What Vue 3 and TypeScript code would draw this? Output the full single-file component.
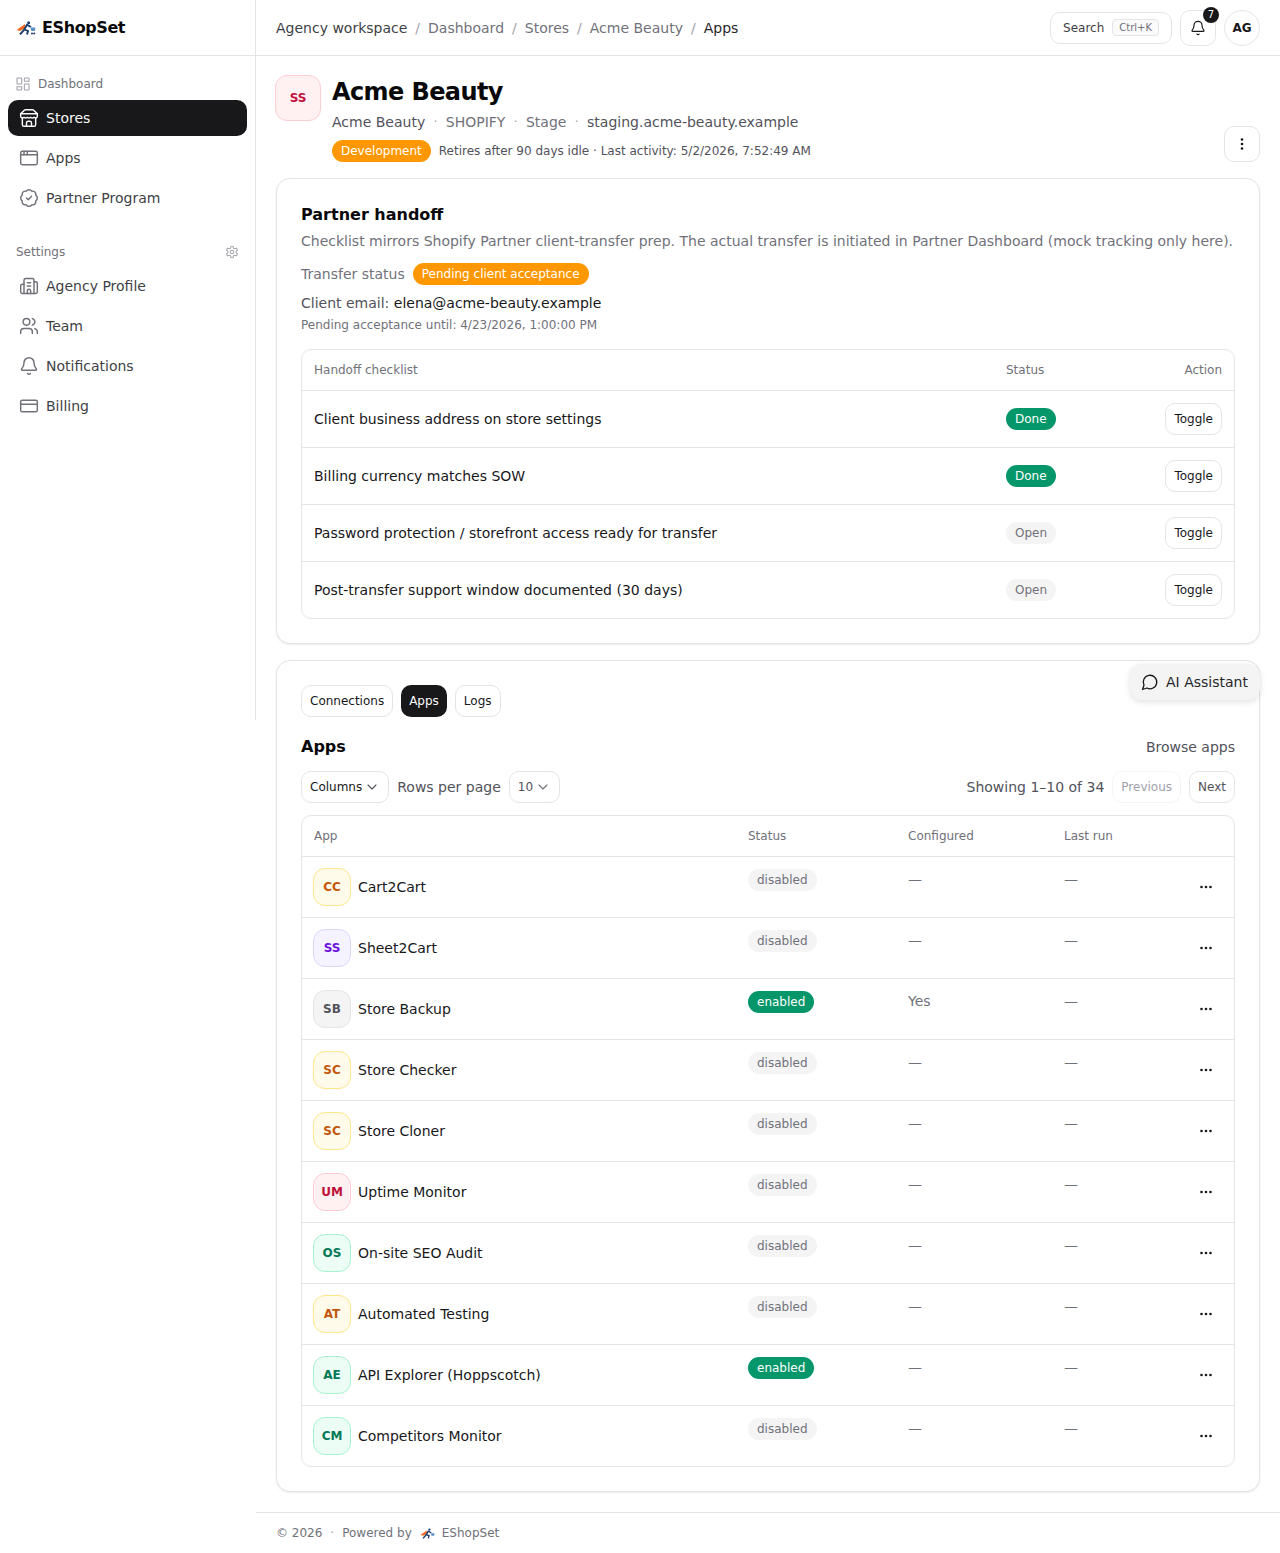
<script setup lang="ts">
interface NavItem {
  label: string
  icon: string
  active?: boolean
}

interface AppRow {
  code: string
  name: string
  tone: string
  enabled: boolean
  configured: string
}

const mainNav: NavItem[] = [
  { label: 'Stores', icon: 'store', active: true },
  { label: 'Apps', icon: 'apps' },
  { label: 'Partner Program', icon: 'partner' }
]

const settingsNav: NavItem[] = [
  { label: 'Agency Profile', icon: 'building' },
  { label: 'Team', icon: 'team' },
  { label: 'Notifications', icon: 'bell' },
  { label: 'Billing', icon: 'card' }
]

const crumbs = ['Dashboard', 'Stores', 'Acme Beauty']

const checklist = [
  { label: 'Client business address on store settings', done: true },
  { label: 'Billing currency matches SOW', done: true },
  { label: 'Password protection / storefront access ready for transfer', done: false },
  { label: 'Post-transfer support window documented (30 days)', done: false }
]

const apps: AppRow[] = [
  { code: 'CC', name: 'Cart2Cart', tone: 'amber', enabled: false, configured: '—' },
  { code: 'SS', name: 'Sheet2Cart', tone: 'violet', enabled: false, configured: '—' },
  { code: 'SB', name: 'Store Backup', tone: 'gray', enabled: true, configured: 'Yes' },
  { code: 'SC', name: 'Store Checker', tone: 'amber', enabled: false, configured: '—' },
  { code: 'SC', name: 'Store Cloner', tone: 'amber', enabled: false, configured: '—' },
  { code: 'UM', name: 'Uptime Monitor', tone: 'rose', enabled: false, configured: '—' },
  { code: 'OS', name: 'On-site SEO Audit', tone: 'green', enabled: false, configured: '—' },
  { code: 'AT', name: 'Automated Testing', tone: 'amber', enabled: false, configured: '—' },
  { code: 'AE', name: 'API Explorer (Hoppscotch)', tone: 'green', enabled: true, configured: '—' },
  { code: 'CM', name: 'Competitors Monitor', tone: 'green', enabled: false, configured: '—' }
]
</script>

<template>
  <div class="shell">
    <aside class="sidebar">
      <div class="brand">
        <svg class="brand-mark" viewBox="0 0 20 14" width="20" height="14">
          <path d="M0.5 9 L9 3 L9.5 7 L4 10 Z" fill="#f26a21" />
          <circle cx="12.6" cy="1.8" r="1.5" fill="#1c3f6e" />
          <path d="M4 13.5 L8 9 L11 3.8 L15 6 M8.5 8.5 L12 10 L11 13.5" fill="none" stroke="#1c3f6e" stroke-width="1.9" />
          <path d="M14.5 6.5 H19.5 L18.8 10 H15.3 Z" fill="#5b8fc4" />
          <circle cx="16" cy="12.4" r="1" fill="#1c3f6e" />
          <circle cx="18.2" cy="12.4" r="1" fill="#1c3f6e" />
        </svg>
        <span>EShopSet</span>
      </div>
      <nav class="nav">
        <div class="nav-head">
          <svg class="ico-dash" viewBox="0 0 24 24"><rect x="3" y="3" width="7" height="9" rx="1" /><rect x="14" y="3" width="7" height="5" rx="1" /><rect x="14" y="12" width="7" height="9" rx="1" /><rect x="3" y="16" width="7" height="5" rx="1" /></svg>
          <span>Dashboard</span>
        </div>
        <a v-for="item in mainNav" :key="item.label" class="nav-item" :class="{ active: item.active }">
          <svg class="ico" viewBox="0 0 24 24">
            <template v-if="item.icon === 'store'">
              <path d="m2 7 4.41-4.41A2 2 0 0 1 7.83 2h8.34a2 2 0 0 1 1.42.59L22 7" /><path d="M4 12v8a2 2 0 0 0 2 2h12a2 2 0 0 0 2-2v-8" /><path d="M15 22v-4a2 2 0 0 0-2-2h-2a2 2 0 0 0-2 2v4" /><path d="M2 7h20" /><path d="M22 7v3a2 2 0 0 1-2 2a2.7 2.7 0 0 1-1.59-.63.7.7 0 0 0-.82 0A2.7 2.7 0 0 1 16 12a2.7 2.7 0 0 1-1.59-.63.7.7 0 0 0-.82 0A2.7 2.7 0 0 1 12 12a2.7 2.7 0 0 1-1.59-.63.7.7 0 0 0-.82 0A2.7 2.7 0 0 1 8 12a2.7 2.7 0 0 1-1.59-.63.7.7 0 0 0-.82 0A2.7 2.7 0 0 1 4 12a2 2 0 0 1-2-2V7" />
            </template>
            <template v-else-if="item.icon === 'apps'">
              <rect x="2" y="4" width="20" height="16" rx="2" /><path d="M10 4v4" /><path d="M2 8h20" /><path d="M6 4v4" />
            </template>
            <template v-else>
              <path d="M3.85 8.62a4 4 0 0 1 4.78-4.77 4 4 0 0 1 6.74 0 4 4 0 0 1 4.78 4.78 4 4 0 0 1 0 6.74 4 4 0 0 1-4.77 4.78 4 4 0 0 1-6.75 0 4 4 0 0 1-4.78-4.77 4 4 0 0 1 0-6.76Z" /><path d="m9 12 2 2 4-4" />
            </template>
          </svg>
          <span>{{ item.label }}</span>
        </a>
        <div class="nav-head settings">
          <span>Settings</span>
          <svg class="ico-small" viewBox="0 0 24 24"><path d="M12.22 2h-.44a2 2 0 0 0-2 2v.18a2 2 0 0 1-1 1.73l-.43.25a2 2 0 0 1-2 0l-.15-.08a2 2 0 0 0-2.73.73l-.22.38a2 2 0 0 0 .73 2.73l.15.1a2 2 0 0 1 1 1.72v.51a2 2 0 0 1-1 1.74l-.15.09a2 2 0 0 0-.73 2.73l.22.38a2 2 0 0 0 2.73.73l.15-.08a2 2 0 0 1 2 0l.43.25a2 2 0 0 1 1 1.73V20a2 2 0 0 0 2 2h.44a2 2 0 0 0 2-2v-.18a2 2 0 0 1 1-1.73l.43-.25a2 2 0 0 1 2 0l.15.08a2 2 0 0 0 2.73-.73l.22-.39a2 2 0 0 0-.73-2.73l-.15-.08a2 2 0 0 1-1-1.74v-.5a2 2 0 0 1 1-1.74l.15-.09a2 2 0 0 0 .73-2.73l-.22-.38a2 2 0 0 0-2.73-.73l-.15.08a2 2 0 0 1-2 0l-.43-.25a2 2 0 0 1-1-1.73V4a2 2 0 0 0-2-2z" /><circle cx="12" cy="12" r="3" /></svg>
        </div>
        <a v-for="item in settingsNav" :key="item.label" class="nav-item">
          <svg class="ico" viewBox="0 0 24 24">
            <template v-if="item.icon === 'building'">
              <path d="M10 12h4" /><path d="M10 8h4" /><path d="M14 21v-3a2 2 0 0 0-4 0v3" /><path d="M6 10H4a2 2 0 0 0-2 2v7a2 2 0 0 0 2 2h16a2 2 0 0 0 2-2V9a2 2 0 0 0-2-2h-2" /><path d="M6 21V5a2 2 0 0 1 2-2h8a2 2 0 0 1 2 2v16" />
            </template>
            <template v-else-if="item.icon === 'team'">
              <path d="M16 21v-2a4 4 0 0 0-4-4H6a4 4 0 0 0-4 4v2" /><circle cx="9" cy="7" r="4" /><path d="M22 21v-2a4 4 0 0 0-3-3.87" /><path d="M16 3.13a4 4 0 0 1 0 7.75" />
            </template>
            <template v-else-if="item.icon === 'bell'">
              <path d="M10.268 21a2 2 0 0 0 3.464 0" /><path d="M3.262 15.326A1 1 0 0 0 4 17h16a1 1 0 0 0 .74-1.673C19.41 13.956 18 12.499 18 8A6 6 0 0 0 6 8c0 4.499-1.411 5.956-2.738 7.326" />
            </template>
            <template v-else>
              <rect x="2" y="5" width="20" height="14" rx="2" /><path d="M2 10h20" />
            </template>
          </svg>
          <span>{{ item.label }}</span>
        </a>
      </nav>
    </aside>

    <div class="body">
      <header class="topbar">
        <div class="crumbs">
          <span class="crumb-root">Agency workspace</span>
          <template v-for="c in crumbs" :key="c">
            <span class="sep">/</span>
            <span class="crumb">{{ c }}</span>
          </template>
          <span class="sep">/</span>
          <span class="crumb-last">Apps</span>
        </div>
        <div class="top-actions">
          <button class="search">Search <kbd>Ctrl+K</kbd></button>
          <button class="square bell">
            <svg class="ico dark" viewBox="0 0 24 24"><path d="M10.268 21a2 2 0 0 0 3.464 0" /><path d="M3.262 15.326A1 1 0 0 0 4 17h16a1 1 0 0 0 .74-1.673C19.41 13.956 18 12.499 18 8A6 6 0 0 0 6 8c0 4.499-1.411 5.956-2.738 7.326" /></svg>
            <span class="count">7</span>
          </button>
          <div class="avatar">AG</div>
        </div>
      </header>

      <main class="content">
        <section class="store-head">
          <div class="store-left">
            <div class="store-logo">SS</div>
            <div>
              <h1>Acme Beauty</h1>
              <div class="store-meta">
                <span class="strong">Acme Beauty</span><i>·</i><span>SHOPIFY</span><i>·</i><span>Stage</span><i>·</i><span class="strong">staging.acme-beauty.example</span>
              </div>
              <div class="store-status">
                <span class="pill orange dev">Development</span>
                <span>Retires after 90 days idle · Last activity: 5/2/2026, 7:52:49 AM</span>
              </div>
            </div>
          </div>
          <button class="square kebab">
            <svg viewBox="0 0 4 14" width="4" height="14"><circle cx="2" cy="2.5" r="1.3" /><circle cx="2" cy="7" r="1.3" /><circle cx="2" cy="11.5" r="1.3" /></svg>
          </button>
        </section>

        <section class="card handoff">
          <h2>Partner handoff</h2>
          <p class="desc">Checklist mirrors Shopify Partner client-transfer prep. The actual transfer is initiated in Partner Dashboard (mock tracking only here).</p>
          <div class="transfer">
            <span>Transfer status</span>
            <span class="pill orange">Pending client acceptance</span>
          </div>
          <p class="email">Client email: <span>elena@acme-beauty.example</span></p>
          <p class="until">Pending acceptance until: 4/23/2026, 1:00:00 PM</p>

          <div class="table check-table">
            <div class="check-row thead">
              <span>Handoff checklist</span><span>Status</span><span class="right">Action</span>
            </div>
            <div v-for="row in checklist" :key="row.label" class="check-row">
              <span>{{ row.label }}</span>
              <span><span class="pill state" :class="row.done ? 'green' : 'muted'">{{ row.done ? 'Done' : 'Open' }}</span></span>
              <span class="right"><button class="btn">Toggle</button></span>
            </div>
          </div>
        </section>

        <section class="card apps">
          <div class="tabs">
            <button class="btn">Connections</button>
            <button class="btn on">Apps</button>
            <button class="btn">Logs</button>
          </div>
          <div class="apps-title">
            <h2>Apps</h2>
            <a>Browse apps</a>
          </div>
          <div class="toolbar">
            <div class="tool-left">
              <button class="btn">Columns
                <svg class="chev" viewBox="0 0 24 24"><path d="m6 9 6 6 6-6" /></svg>
              </button>
              <span>Rows per page</span>
              <button class="btn soft">10
                <svg class="chev" viewBox="0 0 24 24"><path d="m6 9 6 6 6-6" /></svg>
              </button>
            </div>
            <div class="tool-right">
              <span>Showing 1–10 of 34</span>
              <button class="btn off">Previous</button>
              <button class="btn soft">Next</button>
            </div>
          </div>

          <div class="table">
            <div class="app-row thead">
              <span>App</span><span>Status</span><span>Configured</span><span>Last run</span><span></span>
            </div>
            <div v-for="(app, i) in apps" :key="i" class="app-row">
              <div class="app-name">
                <span class="app-logo" :class="app.tone">{{ app.code }}</span>
                <span>{{ app.name }}</span>
              </div>
              <div class="top"><span class="pill state" :class="app.enabled ? 'green' : 'muted'">{{ app.enabled ? 'enabled' : 'disabled' }}</span></div>
              <div class="top dim">{{ app.configured }}</div>
              <div class="top dim">—</div>
              <div class="dots">
                <svg viewBox="0 0 14 4" width="14" height="4"><circle cx="2.5" cy="2" r="1.3" /><circle cx="7" cy="2" r="1.3" /><circle cx="11.5" cy="2" r="1.3" /></svg>
              </div>
            </div>
          </div>
        </section>
      </main>

      <footer class="footer">
        <span>© 2026</span>
        <i>·</i>
        <span>Powered by</span>
        <svg class="foot-mark" viewBox="0 0 20 14" width="15" height="11">
          <path d="M0.5 9 L9 3 L9.5 7 L4 10 Z" fill="#f26a21" />
          <circle cx="12.6" cy="1.8" r="1.5" fill="#1c3f6e" />
          <path d="M4 13.5 L8 9 L11 3.8 L15 6 M8.5 8.5 L12 10 L11 13.5" fill="none" stroke="#1c3f6e" stroke-width="1.9" />
          <path d="M14.5 6.5 H19.5 L18.8 10 H15.3 Z" fill="#5b8fc4" />
        </svg>
        <span>EShopSet</span>
      </footer>
    </div>

    <button class="assistant">
      <svg class="ico dark" viewBox="0 0 24 24"><path d="M7.9 20A9 9 0 1 0 4 16.1L2 22Z" /></svg>
      AI Assistant
    </button>
  </div>
</template>

<style>
html,
body {
  margin: 0;
  background: #fff;
}
</style>

<style scoped>
.shell {
  position: relative;
  display: flex;
  align-items: flex-start;
  font-family: "DejaVu Sans", sans-serif;
  color: #18181b;
  font-size: 14px;
}

button {
  font-family: inherit;
  cursor: pointer;
}

/* sidebar */
.sidebar {
  width: 256px;
  height: 720px;
  flex-shrink: 0;
  box-sizing: border-box;
  border-right: 1px solid #e4e4e7;
}

.brand {
  height: 56px;
  box-sizing: border-box;
  border-bottom: 1px solid #e4e4e7;
  display: flex;
  align-items: center;
  gap: 6px;
  padding-left: 16px;
  font-size: 16px;
  letter-spacing: -0.4px;
  font-weight: 700;
  color: #09090b;
}

.nav {
  padding: 16px 8px;
  display: flex;
  flex-direction: column;
}

.nav-head {
  height: 24px;
  display: flex;
  align-items: center;
  gap: 7px;
  padding: 0 8px 0 7px;
  font-size: 12px;
  color: #71717a;
  margin-bottom: 4px;
}

.nav-head.settings {
  justify-content: space-between;
  padding-left: 8px;
  margin-top: 20px;
  margin-bottom: 4px;
}

.nav-item {
  height: 36px;
  margin-bottom: 4px;
  display: flex;
  align-items: center;
  gap: 7px;
  padding: 0 11px;
  border-radius: 10px;
  color: #3f3f46;
}

.nav-item.active {
  background: #18181b;
  color: #fafafa;
}

.ico,
.ico-small,
.ico-dash {
  fill: none;
  stroke: currentColor;
  stroke-linecap: round;
  stroke-linejoin: round;
  flex-shrink: 0;
}

.ico {
  width: 20px;
  height: 20px;
  stroke-width: 1.75;
  color: #71717a;
}

.nav-item.active .ico {
  color: #fafafa;
}

.ico.dark {
  color: #18181b;
}

.ico-small {
  width: 14px;
  height: 14px;
  stroke-width: 1.75;
  color: #a1a1aa;
}

.ico-dash {
  width: 16px;
  height: 16px;
  stroke-width: 1.6;
  color: #a1a1aa;
}

/* top bar */
.body {
  flex: 1;
  min-width: 0;
}

.topbar {
  height: 56px;
  box-sizing: border-box;
  border-bottom: 1px solid #e4e4e7;
  display: flex;
  align-items: center;
  justify-content: space-between;
  padding: 0 20px;
}

.crumbs {
  display: flex;
  align-items: center;
  gap: 8px;
  color: #71717a;
}

.crumb-root {
  color: #3f3f46;
}

.crumb-last {
  color: #27272a;
}

.crumb {
  color: #71717a;
}

.sep {
  color: #a1a1aa;
}

.top-actions {
  display: flex;
  align-items: center;
  gap: 8px;
}

.search {
  height: 32px;
  box-sizing: border-box;
  border: 1px solid #e4e4e7;
  border-radius: 10px;
  background: #fff;
  padding: 0 12px;
  display: flex;
  align-items: center;
  gap: 8px;
  font-size: 12px;
  color: #3f3f46;
}

kbd {
  font-family: inherit;
  font-size: 10px;
  color: #71717a;
  background: #fafafa;
  border: 1px solid #e4e4e7;
  border-radius: 4px;
  padding: 2px 6px;
}

.square {
  width: 36px;
  height: 36px;
  box-sizing: border-box;
  border: 1px solid #e4e4e7;
  border-radius: 10px;
  background: #fff;
  display: flex;
  align-items: center;
  justify-content: center;
  padding: 0;
}

.square .ico {
  width: 16px;
  height: 16px;
}

.bell {
  position: relative;
}

.count {
  position: absolute;
  top: -4px;
  right: -4px;
  width: 16px;
  height: 16px;
  border-radius: 50%;
  background: #18181b;
  color: #fafafa;
  font-size: 10px;
  line-height: 16px;
  text-align: center;
}

.avatar {
  width: 36px;
  height: 36px;
  box-sizing: border-box;
  border: 1px solid #e4e4e7;
  border-radius: 50%;
  display: flex;
  align-items: center;
  justify-content: center;
  font-size: 12px;
  font-weight: 700;
}

/* page content */
.content {
  padding: 19px 20px 20px;
  display: flex;
  flex-direction: column;
  gap: 16px;
}

.store-head {
  display: flex;
  justify-content: space-between;
  align-items: flex-end;
}

.store-left {
  display: flex;
  gap: 11px;
  align-items: flex-start;
  margin-left: -1px;
}

.store-logo {
  width: 46px;
  height: 46px;
  box-sizing: border-box;
  border: 1px solid #fecdd3;
  background: #fff1f2;
  color: #be123c;
  border-radius: 12px;
  display: flex;
  align-items: center;
  justify-content: center;
  font-size: 12px;
  font-weight: 700;
}

h1 {
  margin: 1px 0 -1px;
  font-size: 24px;
  letter-spacing: -0.6px;
  line-height: 32px;
  font-weight: 700;
  color: #09090b;
}

.store-meta {
  display: flex;
  align-items: center;
  height: 20px;
  margin-top: 5px;
  color: #71717a;
}

.store-meta .strong {
  color: #52525b;
}

.store-meta i {
  font-style: normal;
  color: #a1a1aa;
  width: 20.6px;
  text-align: center;
  font-size: 12px;
}

.store-status {
  display: flex;
  align-items: center;
  gap: 8px;
  margin-top: 8px;
  font-size: 12px;
  color: #52525b;
}

.pill {
  display: inline-flex;
  align-items: center;
  height: 22px;
  box-sizing: border-box;
  padding: 0 9px;
  border-radius: 999px;
  font-size: 12px;
}

.orange {
  background: #ff9800;
  color: #fff;
}

.state.green {
  background: #059669;
  color: #fff;
}

.state.muted {
  background: #f4f4f5;
  color: #71717a;
}

.kebab {
  color: #18181b;
}

.kebab svg {
  fill: currentColor;
}

.card {
  border: 1px solid #e4e4e7;
  border-radius: 14px;
  box-shadow: 0 1px 2px rgba(0, 0, 0, 0.08);
  padding: 24px;
  background: #fff;
}

h2 {
  margin: 0;
  font-size: 16px;
  line-height: 24px;
  font-weight: 700;
  color: #09090b;
}

.desc {
  margin: 4px 0 0;
  line-height: 20px;
  color: #71717a;
}

.transfer {
  margin-top: 12px;
  display: flex;
  align-items: center;
  gap: 8px;
  color: #71717a;
}

.email {
  margin: 8px 0 0;
  line-height: 20px;
  color: #52525b;
}

.email span {
  color: #18181b;
}

.until {
  margin: 4px 0 0;
  font-size: 12px;
  line-height: 16px;
  color: #71717a;
}

.table {
  border: 1px solid #e4e4e7;
  border-radius: 10px;
  overflow: hidden;
}

.check-table {
  margin-top: 16px;
}

.check-row {
  display: grid;
  grid-template-columns: 692px 1fr auto;
  align-items: center;
  height: 57px;
  box-sizing: border-box;
  padding: 0 12px;
  border-top: 1px solid #e4e4e7;
}

.thead {
  font-size: 12px;
  color: #71717a;
}

.check-row.thead {
  height: 40px;
  border-top: 0;
}

.right {
  text-align: right;
}

.btn {
  height: 32px;
  box-sizing: border-box;
  padding: 0 8px;
  border: 1px solid #e4e4e7;
  border-radius: 10px;
  background: #fff;
  color: #18181b;
  font-size: 12px;
  display: inline-flex;
  align-items: center;
  gap: 2px;
}

.btn.on {
  background: #18181b;
  border: 0;
  color: #fafafa;
}

.btn.soft {
  color: #52525b;
}

.btn.off {
  color: #a1a1aa;
  border-color: #f4f4f5;
}

.chev {
  width: 16px;
  height: 16px;
  fill: none;
  stroke: #52525b;
  stroke-width: 1.6;
  stroke-linecap: round;
  stroke-linejoin: round;
}

.soft .chev {
  stroke: #71717a;
}

/* apps card */
.tabs {
  display: flex;
  gap: 8px;
}

.apps-title {
  margin-top: 18px;
  display: flex;
  justify-content: space-between;
  align-items: center;
}

.apps-title a {
  color: #52525b;
}

.toolbar {
  margin-top: 12px;
  display: flex;
  justify-content: space-between;
  align-items: center;
  color: #52525b;
}

.tool-left,
.tool-right {
  display: flex;
  align-items: center;
  gap: 8px;
}

.apps .table {
  margin-top: 12px;
}

.app-row {
  display: grid;
  grid-template-columns: 434px 160px 156px 118px 1fr;
  height: 61px;
  box-sizing: border-box;
  padding: 0 12px;
  border-top: 1px solid #e4e4e7;
  align-items: center;
}

.app-row.thead {
  height: 40px;
  border-top: 0;
}

.app-name {
  display: flex;
  align-items: center;
  gap: 7px;
  margin-left: -1px;
}

.app-logo {
  width: 38px;
  height: 38px;
  box-sizing: border-box;
  border: 1px solid;
  border-radius: 12px;
  display: flex;
  align-items: center;
  justify-content: center;
  font-size: 12px;
  font-weight: 700;
}

.app-logo.amber {
  background: #fffbeb;
  border-color: #fde68a;
  color: #c2570c;
}

.app-logo.violet {
  background: #f5f3ff;
  border-color: #ddd6fe;
  color: #6d11e0;
}

.app-logo.gray {
  background: #f4f4f5;
  border-color: #e4e4e7;
  color: #52525b;
}

.app-logo.rose {
  background: #fff1f2;
  border-color: #fecdd3;
  color: #be123c;
}

.app-logo.green {
  background: #ecfdf5;
  border-color: #a7f3d0;
  color: #047857;
}

.top {
  align-self: start;
  margin-top: 12px;
}

.top.dim {
  line-height: 20px;
  color: #71717a;
}

.dots {
  justify-self: end;
  margin-right: 9px;
  display: flex;
  fill: #18181b;
}

.footer {
  height: 41px;
  box-sizing: border-box;
  border-top: 1px solid #e4e4e7;
  display: flex;
  align-items: center;
  padding-left: 20px;
  font-size: 12px;
  color: #71717a;
}

.footer i {
  font-style: normal;
  color: #a1a1aa;
  margin: 0 8px;
}

.foot-mark {
  margin: 0 7px 0 8px;
}

.assistant {
  position: absolute;
  top: 664px;
  right: 20px;
  width: 130px;
  height: 36px;
  box-sizing: border-box;
  display: flex;
  align-items: center;
  gap: 7px;
  padding: 0 11px;
  border: 0;
  border-radius: 12px;
  background: #f4f4f5;
  color: #27272a;
  font-size: 14px;
  white-space: nowrap;
  box-shadow: 0 2px 6px rgba(0, 0, 0, 0.12);
}

.assistant .ico {
  width: 18px;
  height: 18px;
}
</style>
